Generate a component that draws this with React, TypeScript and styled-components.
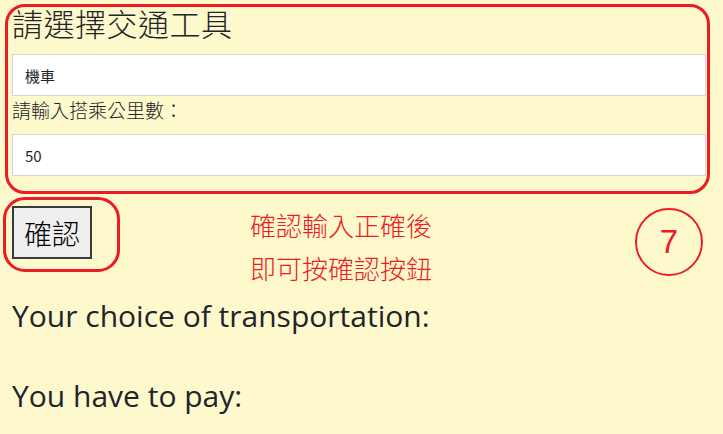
import React from 'react';
import styled, { createGlobalStyle } from 'styled-components';

const GlobalStyle = createGlobalStyle`
  html, body {
    margin: 0;
    padding: 0;
    background: #fef8cd;
  }
  body {
    color: #212529;
    font-family: 'Open Sans', 'Noto Sans CJK TC', sans-serif;
  }
`;

const mark = '#ec1c24';
const cjk = `'Noto Sans CJK TC', sans-serif`;

const Page = styled.div`
  width: 723px;
  height: 434px;
  overflow: hidden;
`;

const FormBox = styled.section`
  margin: 4px 13px 0 5px;
  padding: 0 1px 15px 4px;
  border: 3px solid ${mark};
  border-radius: 20px;
`;

const Title = styled.h3`
  margin: 0 0 15px;
  font: 300 31px/32px ${cjk};
  letter-spacing: 0.5px;
`;

const TextInput = styled.input`
  display: block;
  box-sizing: border-box;
  width: 100%;
  height: 42px;
  margin: 0;
  padding: 0 12px;
  border: 1px solid #ced4da;
  border-radius: 0;
  background: #fff;
  color: #212529;
  font: 400 15px ${cjk};
  outline: none;
`;

const Label = styled.label`
  display: block;
  margin: 2px 0 12px;
  font: 300 19px/24px ${cjk};
`;

const ActionRow = styled.div`
  display: flex;
  align-items: flex-start;
`;

const ButtonMark = styled.div`
  margin: 3px 0 0 3px;
  padding: 6px 25px 10px 6px;
  border: 3px solid ${mark};
  border-radius: 22px;
`;

const ConfirmButton = styled.button`
  display: block;
  box-sizing: border-box;
  width: 80px;
  height: 53px;
  padding: 0;
  border: 2px solid #3a3a3a;
  background: #efefef;
  color: #000;
  font: 300 28px ${cjk};
`;

const Note = styled.div`
  margin: 9px 0 0 130px;
  color: ${mark};
  font: 300 26px/43px ${cjk};
`;

const StepBadge = styled.div`
  box-sizing: border-box;
  width: 68px;
  height: 68px;
  margin: 14px 20px 0 auto;
  border: 2.5px solid ${mark};
  border-radius: 50%;
  display: flex;
  align-items: center;
  justify-content: center;
  color: ${mark};
  font: 400 33px 'Liberation Sans', Arial, sans-serif;
`;

const Result = styled.p<{ $gap: number }>`
  margin: ${(p) => p.$gap}px 0 0 12px;
  font: 400 30px/40px 'Open Sans', sans-serif;
`;

export default function App() {
  return (
    <Page>
      <GlobalStyle />
      <FormBox>
        <Title>請選擇交通工具</Title>
        <TextInput defaultValue="機車" />
        <Label>請輸入搭乘公里數：</Label>
        <TextInput defaultValue="50" />
      </FormBox>
      <ActionRow>
        <ButtonMark>
          <ConfirmButton>確認</ConfirmButton>
        </ButtonMark>
        <Note>
          確認輸入正確後
          <br />
          即可按確認按鈕
        </Note>
        <StepBadge>7</StepBadge>
      </ActionRow>
      <Result $gap={7}>Your choice of transportation:</Result>
      <Result $gap={40}>You have to pay:</Result>
    </Page>
  );
}
